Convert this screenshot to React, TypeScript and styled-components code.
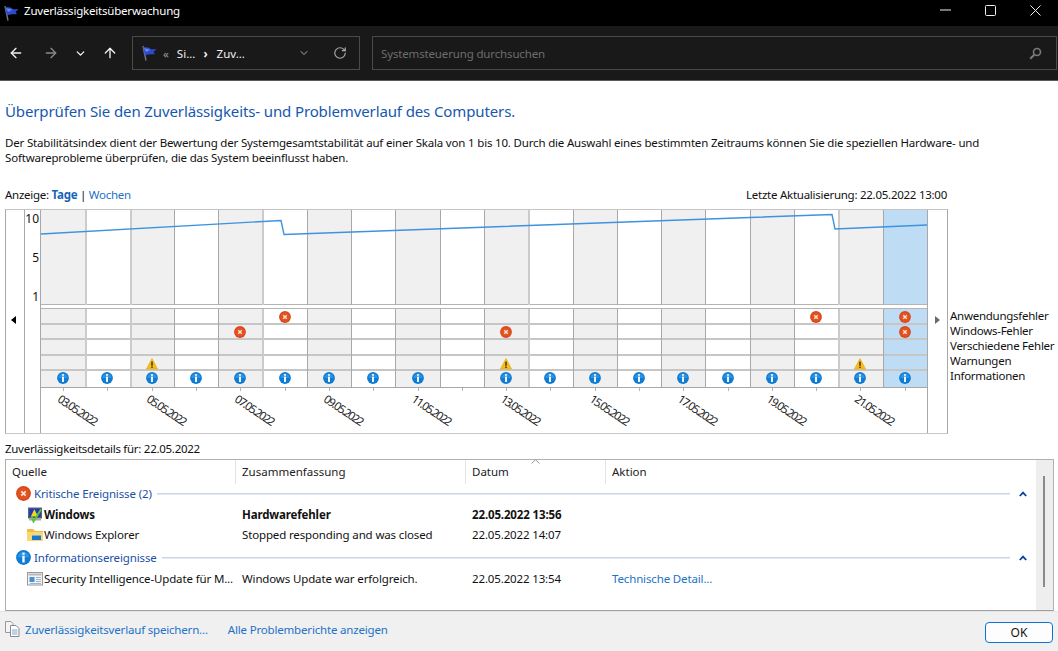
import React from "react";
import styled, { createGlobalStyle } from "styled-components";
import { ArrowLeft, ArrowRight, ArrowUp, ChevronDown, RotateCw } from "lucide-react";

const Global = createGlobalStyle`
  html, body { margin: 0; padding: 0; background: #fff; overflow: hidden; }
  body { font-family: "Noto Sans", "Liberation Sans", sans-serif; font-size: 11.5px; color: #000; }
  #root { width: 1058px; height: 651px; }
  svg { flex: none; }
`;

const Window = styled.div`
  width: 1058px; height: 651px; display: flex; flex-direction: column; overflow: hidden;
`;
const TitleBar = styled.div`
  height: 26px; background: #000; color: #fff; display: flex; align-items: center; padding-left: 3px; flex: none;
`;
const TitleText = styled.span`
  margin-left: 4px; font-size: 11.5px; letter-spacing: -.2px; margin-top: -6px;
`;
const WindowControls = styled.div`
  margin-left: auto; display: flex; align-items: center; height: 20px; gap: 34px; padding-right: 17px; margin-top: -6px;
`;
const Toolbar = styled.div`
  height: 54px; flex: none; background: #191919; border-bottom: 1px solid #5a5a5a; display: flex; align-items: center; box-sizing: content-box;
`;
const NavButton = styled.button<{ $w: number; $dim?: boolean }>`
  all: unset; width: ${p => p.$w}px; height: 34px; display: flex; align-items: center; justify-content: center;
  color: ${p => (p.$dim ? "#8a8a8a" : "#f2f2f2")};
`;
const NavGroup = styled.div`
  display: flex; padding-left: 1px; width: 132px; flex: none; box-sizing: border-box;
`;
const AddressBox = styled.div`
  width: 228px; height: 34px; box-sizing: border-box; border: 1px solid #4a4a4a; display: flex; align-items: center; color: #f0f0f0; padding-left: 8px; flex: none;
`;
const Crumb = styled.span<{ $dim?: boolean; $gap: number; $bold?: boolean }>`
  color: ${p => (p.$dim ? "#9a9a9a" : "#f0f0f0")}; margin-left: ${p => p.$gap}px; font-weight: ${p => (p.$bold ? 700 : 400)};
`;
const AddressTail = styled.div`
  margin-left: auto; display: flex; align-items: center; gap: 23px; padding-right: 12px; color: #aaa;
`;
const SearchBox = styled.div`
  margin-left: 12px; width: 685px; height: 34px; box-sizing: border-box; border: 1px solid #4a4a4a; display: flex; align-items: center; justify-content: space-between; padding: 0 14px 0 8px; color: #6d6d6d; flex: none; letter-spacing: -.15px;
`;
const Content = styled.main`
  flex: 1; min-height: 0; padding-left: 5px; display: flex; flex-direction: column;
`;
const Heading = styled.h1`
  font-size: 15px; line-height: 22px; font-weight: 400; color: #1558b0; margin: 19px 0 0; letter-spacing: -.12px;
`;
const Description = styled.p`
  line-height: 15px; margin: 13px 0 0; width: 1000px; letter-spacing: -.18px; color: #111;
`;
const ViewRow = styled.div`
  display: flex; justify-content: space-between; width: 942px; margin-top: 22px; line-height: 16px; letter-spacing: -.26px; height: 16px; color: #111;
`;
const Strong = styled.a`
  color: #1565b8; font-weight: 700;
`;
const Link = styled.a`
  color: #2272c8;
`;
const ChartRow = styled.div`
  display: flex; margin-top: 6px; flex: none;
`;
const Chart = styled.section`
  height: 225px; width: 943px; box-sizing: border-box; border: 1px solid #a8a8a8;
  border-bottom-color: #c8c8c8; border-top-color: #c4c4c4; display: grid; grid-template-columns: 19px 16px 886px 20px; flex: none; background: #fff;
`;
const Side = styled.div<{ $left?: boolean }>`
  display: flex; align-items: center; justify-content: center; padding: 0 ${p => (p.$left ? 3 : 0)}px 4px 0; border-${p => (p.$left ? "right" : "left")}: 1px solid #a8a8a8;
`;
const Scale = styled.div`
  position: relative; border-right: 1px solid #a8a8a8;
`;
const ScaleNumber = styled.span<{ $top: number }>`
  position: absolute; right: 1px; top: ${p => p.$top}px; line-height: 14px; font-size: 12px; color: #111;
`;
const Plot = styled.div`
  position: relative; display: grid; grid-template-rows: 95px 4px 79px 1fr; min-width: 0;
`;
const ColumnsRow = styled.div`
  display: grid; grid-template-columns: repeat(20, 44.3px);
`;
const leftLine = (n: number) => {
  if (n === 0) return "inset 0 0 0 transparent";
  return [1, 2, 5, 11, 18].includes(n) ? "inset 2px 0 0 #cbcbcb" : "inset 1px 0 0 #a8a8a8";
};
const fill = (kind: number) => (kind === 2 ? "#bfdcf5" : kind === 1 ? "#f0f0f0" : "#fff");
const TopColumn = styled.div<{ $kind: number; $n: number }>`
  background: ${p => fill(p.$kind)};
  box-shadow: ${p => leftLine(p.$n)}, inset 0 -1px 0 #b4b4b4;
`;
const LineOverlay = styled.svg`
  position: absolute; left: 0; top: 0; pointer-events: none;
`;
const Separator = styled.div`
  background: #fff; border-bottom: 1px solid #b4b4b4;
`;
const Events = styled.div`
  display: grid; grid-template-columns: repeat(20, 44.3px); grid-template-rows: repeat(5, 1fr); border-bottom: 1px solid #a8a8a8;
`;
const EventCell = styled.div<{ $kind: number; $n: number; $last: boolean }>`
  background: ${p => fill(p.$kind)};
  box-shadow: ${p => leftLine(p.$n)}${p => (p.$last ? "" : ", inset 0 -2px 0 #c6c6c6")};
  display: flex; align-items: center; justify-content: center; padding-bottom: ${p => (p.$last ? 2 : 0)}px;
`;
const Dates = styled.div`
  display: grid; grid-template-columns: repeat(20, 44.3px);
`;
const DateCell = styled.div`
  position: relative;
`;
const Tick = styled.i`
  position: absolute; left: 50%; top: 0; width: 1px; height: 3px; background: #b4b4b4;
`;
const DateText = styled.span`
  position: absolute; left: 22px; top: 4px; font-size: 11.5px; line-height: 13px; letter-spacing: -1.45px; transform: rotate(34deg); transform-origin: left top; white-space: nowrap; color: #222;
`;
const Legend = styled.ul`
  margin: 99px 0 0 2px; padding: 0; list-style: none; line-height: 15px; white-space: nowrap; letter-spacing: -.27px; color: #111;
`;
const DetailsTitle = styled.div`
  height: 16px; line-height: 16px; margin-top: 7px; letter-spacing: -.28px; color: #111;
`;
const DetailBox = styled.section`
  margin-top: 2px; width: 1049px; height: 152px; flex: none; box-sizing: border-box; border: 1px solid #b0b0b0; border-bottom-color: #a0a0a0; display: grid; grid-template-columns: 1fr 17px; background: #fff;
`;
const Scrollbar = styled.div`
  background: #eeeeee; position: relative;
`;
const Thumb = styled.div`
  position: absolute; left: 7px; top: 16px; width: 2px; height: 111px; background: #8b8b8b;
`;
const List = styled.div`
  min-width: 0; position: relative;
`;
const Header = styled.div`
  height: 24px; display: grid; grid-template-columns: 230px 230px 140px 1fr; align-items: center; color: #222;
`;
const HeaderCell = styled.div`
  height: 24px; line-height: 24px; padding-left: 6px; box-sizing: border-box; border-right: 1px solid #e4e4e4;
  &:last-child { border: none; }
`;
const SortMark = styled.svg`
  position: absolute; left: 525px; top: -1px;
`;
const GroupRow = styled.div<{ $top: number }>`
  display: flex; align-items: center; height: 21px; padding: 0 9px 0 10px; margin-top: ${p => p.$top}px; color: #2050a8; letter-spacing: -.14px;
`;
const GroupLabel = styled.span`
  margin-left: 3px; white-space: nowrap;
`;
const GroupLine = styled.div`
  flex: 1; height: 1px; background: #c8d4e8; margin-left: 5px; box-shadow: 0 1px 0 #e4eaf4;
`;
const Collapse = styled.svg`
  margin-left: 9px;
`;
const ItemRow = styled.div<{ $bold?: boolean; $h?: number }>`
  display: grid; grid-template-columns: 230px 230px 140px 1fr; height: ${p => p.$h ?? 21}px; align-items: center; font-weight: ${p => (p.$bold ? 700 : 400)}; letter-spacing: -.14px; color: #111; white-space: nowrap;
`;
const SourceCell = styled.div`
  display: flex; align-items: center; padding-left: 21px; gap: 1px; overflow: hidden;
`;
const ItemCell = styled.div`
  padding-left: 6px;
`;
const ActionLink = styled.a`
  color: #2272c8; padding-left: 6px;
`;
const Footer = styled.footer`
  height: 40px; flex: none; background: #f0f0f0; display: flex; align-items: center; padding: 0 5px; border-top: 1px solid #e4e4e4; box-sizing: border-box;
`;
const FooterLink = styled.a<{ $gap: number }>`
  color: #2272c8; letter-spacing: -.18px; margin-top: -5px; margin-left: ${p => p.$gap}px;
`;
const OkButton = styled.button`
  all: unset; margin-left: auto; width: 68px; height: 21px; box-sizing: border-box; background: #fdfdfd; border: 1px solid #0a74d4; border-radius: 4px; text-align: center; line-height: 19px; font-size: 12px; color: #111; margin-top: 2px;
`;
const FooterIcon = styled.svg`
  margin-top: -5px;
`;

const Flag = ({ s = 17 }: { s?: number }) => (
  <svg width={s} height={s} viewBox="0 0 17 17">
    <path d="M2 1 L5 15.5" stroke="#6c7a86" strokeWidth="1.4" fill="none" />
    <path d="M2 1.5 C5 3 7 1.5 9 3.5 C11 5 13 4 15.5 4 L12.5 7 L14 9 C11 9.5 8 8.5 4 10.5 Z" fill="#2f4ac8" />
    <path d="M3 3 C5 4 7 3 9 5 L5 7 Z" fill="#6288ec" />
  </svg>
);
const ErrorIcon = ({ s = 12 }: { s?: number }) => (
  <svg width={s} height={s} viewBox="0 0 13 13">
    <circle cx="6.5" cy="6.5" r="6.4" fill="#d8481c" />
    <circle cx="6.5" cy="6.5" r="5" fill="#e3531f" />
    <path d="M4.6 4.6 L8.4 8.4 M8.4 4.6 L4.6 8.4" stroke="#fbe3d8" strokeWidth="1.5" />
  </svg>
);
const InfoIcon = ({ s = 12 }: { s?: number }) => (
  <svg width={s} height={s} viewBox="0 0 13 13">
    <circle cx="6.5" cy="6.5" r="6.4" fill="#0f7bd2" />
    <path d="M1.5 6.5 A5 5 0 0 1 11.5 6.5 Z" fill="#2a93e4" />
    <rect x="5.5" y="2.3" width="2" height="1.8" fill="#fff" />
    <rect x="5.5" y="5" width="2" height="5.8" fill="#fff" />
  </svg>
);
const WarnIcon = () => (
  <svg width="12" height="12" viewBox="0 0 12 12">
    <path d="M6 .6 L11.6 11 H.4 Z" fill="#f6bd16" stroke="#e8a80c" strokeWidth=".6" strokeLinejoin="round" />
    <rect x="5.3" y="3.6" width="1.4" height="4.2" fill="#3a2c08" />
    <rect x="5.3" y="8.6" width="1.4" height="1.4" fill="#3a2c08" />
  </svg>
);
const MonitorIcon = () => (
  <svg width="16" height="16" viewBox="0 0 16 16">
    <rect x="1" y="0.5" width="14" height="11" fill="#5a6478" />
    <rect x="2.2" y="1.6" width="11.6" height="8.6" fill="#2438b4" />
    <path d="M7.4 2.2 L11 9.6 H3.8 Z" fill="#f0d820" />
    <rect x="2" y="11.5" width="12" height="2" fill="#a8a8a8" />
    <path d="M4.5 9.5 L6.5 14.5 L14 2.5" stroke="#5fc238" strokeWidth="2" fill="none" />
  </svg>
);
const FolderIcon = () => (
  <svg width="16" height="14" viewBox="0 0 16 14">
    <path d="M0 2 Q0 1 1 1 H6 L8 3 H16 V13 H0 Z" fill="#f2bc3a" />
    <rect x="0" y="4" width="16" height="9" fill="#fbd774" />
    <rect x="5" y="8" width="9" height="4" fill="#1e78c8" />
    <rect x="5" y="7" width="9" height="1" fill="#6cb4ec" />
  </svg>
);
const UpdateIcon = () => (
  <svg width="16" height="14" viewBox="0 0 16 14">
    <rect x=".5" y=".5" width="15" height="12.5" fill="#f4f4f4" stroke="#9a9a9a" />
    <rect x="1.5" y="1.5" width="13" height="2" fill="#b8b8b8" />
    <rect x="2.5" y="5" width="5" height="5" fill="#4a8fd0" />
    <path d="M9 5.5 H14 M9 7.5 H14 M9 9.5 H14 M3 11.5 H14" stroke="#9cb4cc" />
  </svg>
);
const PagesIcon = () => (
  <FooterIcon width="15" height="16" viewBox="0 0 15 16">
    <path d="M.5 .5 H6 L8 2.5 V11.5 H.5 Z" fill="#f4f4f4" stroke="#9a9a9a" />
    <path d="M5.5 4.5 H11 L14 7.5 V15.5 H5.5 Z" fill="#fff" stroke="#8a8a8a" />
    <path d="M7 9 H12.5 M7 11 H12.5 M7 13 H12.5" stroke="#7aa6d4" />
  </FooterIcon>
);
const CollapseIcon = () => (
  <Collapse width="8" height="6" viewBox="0 0 8 6">
    <path d="M.8 5 L4 1.6 L7.2 5" stroke="#0b3d9c" strokeWidth="1.8" fill="none" />
  </Collapse>
);
const Triangle = ({ dir, color }: { dir: "l" | "r"; color: string }) => (
  <svg width="5" height="8" viewBox="0 0 5 8">
    <path d={dir === "l" ? "M5 0 V8 L0 4 Z" : "M0 0 V8 L5 4 Z"} fill={color} />
  </svg>
);
const WinMin = () => <svg width="11" height="2" viewBox="0 0 11 2"><path d="M0 1 H11" stroke="#eee" /></svg>;
const WinMax = () => <svg width="11" height="11" viewBox="0 0 11 11"><rect x=".5" y=".5" width="10" height="10" rx="1" stroke="#eee" fill="none" /></svg>;
const WinClose = () => <svg width="11" height="11" viewBox="0 0 11 11"><path d="M.5 .5 L10.5 10.5 M10.5 .5 L.5 10.5" stroke="#eee" /></svg>;
const SearchGlyph = () => (
  <svg width="13" height="13" viewBox="0 0 13 13">
    <circle cx="8" cy="5" r="3.5" stroke="#7a7a7a" strokeWidth="1.6" fill="none" />
    <path d="M5.2 7.8 L1.2 11.8" stroke="#7a7a7a" strokeWidth="2" />
  </svg>
);

type Ev = "e" | "w" | "i" | null;
const kindOf = (c: number) => (c === 19 ? 2 : c % 2 === 0 ? 1 : 0);
const cols = Array.from({ length: 20 }, (_, i) => i);
const rowEvents = (r: number, c: number): Ev => {
  if (r === 0 && (c === 5 || c === 17 || c === 19)) return "e";
  if (r === 1 && (c === 4 || c === 10 || c === 19)) return "e";
  if (r === 3 && (c === 2 || c === 10 || c === 18)) return "w";
  if (r === 4 && c !== 9) return "i";
  return null;
};
const dates = ["03.05.2022", "05.05.2022", "07.05.2022", "09.05.2022", "11.05.2022", "13.05.2022", "15.05.2022", "17.05.2022", "19.05.2022", "21.05.2022"];

export default function App() {
  return (
    <Window>
      <Global />
      <TitleBar>
        <Flag />
        <TitleText>Zuverlässigkeitsüberwachung</TitleText>
        <WindowControls>
          <WinMin />
          <WinMax />
          <WinClose />
        </WindowControls>
      </TitleBar>
      <Toolbar>
        <NavGroup>
          <NavButton $w={30}><ArrowLeft size={16} /></NavButton>
          <NavButton $w={39} $dim><ArrowRight size={16} /></NavButton>
          <NavButton $w={21}><ChevronDown size={13} strokeWidth={2.5} /></NavButton>
          <NavButton $w={38}><ArrowUp size={16} /></NavButton>
        </NavGroup>
        <AddressBox>
          <Flag />
          <Crumb $dim $gap={5}>«</Crumb>
          <Crumb $gap={8}>Si...</Crumb>
          <Crumb $gap={8} $bold>›</Crumb>
          <Crumb $gap={9}>Zuv...</Crumb>
          <AddressTail>
            <ChevronDown size={12} />
            <RotateCw size={14} />
          </AddressTail>
        </AddressBox>
        <SearchBox>
          <span>Systemsteuerung durchsuchen</span>
          <SearchGlyph />
        </SearchBox>
      </Toolbar>
      <Content>
        <Heading>Überprüfen Sie den Zuverlässigkeits- und Problemverlauf des Computers.</Heading>
        <Description>
          Der Stabilitätsindex dient der Bewertung der Systemgesamtstabilität auf einer Skala von 1 bis 10. Durch die Auswahl eines bestimmten Zeitraums können Sie die speziellen Hardware- und Softwareprobleme überprüfen, die das System beeinflusst haben.
        </Description>
        <ViewRow>
          <span>Anzeige: <Strong>Tage</Strong> | <Link>Wochen</Link></span>
          <span>Letzte Aktualisierung: 22.05.2022 13:00</span>
        </ViewRow>
        <ChartRow>
          <Chart>
            <Side $left><Triangle dir="l" color="#000" /></Side>
            <Scale>
              <ScaleNumber $top={2}>10</ScaleNumber>
              <ScaleNumber $top={41}>5</ScaleNumber>
              <ScaleNumber $top={80}>1</ScaleNumber>
            </Scale>
            <Plot>
              <ColumnsRow>
                {cols.map(c => <TopColumn key={c} $kind={kindOf(c)} $n={c} />)}
              </ColumnsRow>
              <Separator />
              <Events>
                {[0, 1, 2, 3, 4].map(r => cols.map(c => {
                  const e = rowEvents(r, c);
                  return (
                    <EventCell key={`${r}-${c}`} $kind={kindOf(c)} $n={c} $last={r === 4}>
                      {e === "e" && <ErrorIcon />}
                      {e === "w" && <WarnIcon />}
                      {e === "i" && <InfoIcon />}
                    </EventCell>
                  );
                }))}
              </Events>
              <Dates>
                {cols.map(c => (
                  <DateCell key={c}>
                    <Tick />
                    {c % 2 === 0 && <DateText>{dates[c / 2]}</DateText>}
                  </DateCell>
                ))}
              </Dates>
              <LineOverlay width="886" height="95" viewBox="0 0 886 95">
                <polyline
                  points="0,24 240,10.5 243,24.5 791,4.5 794,19 886,15"
                  fill="none"
                  stroke="#3c93df"
                  strokeWidth="1.4"
                />
              </LineOverlay>
            </Plot>
            <Side><Triangle dir="r" color="#6a6a6a" /></Side>
          </Chart>
          <Legend>
            <li>Anwendungsfehler</li>
            <li>Windows-Fehler</li>
            <li>Verschiedene Fehler</li>
            <li>Warnungen</li>
            <li>Informationen</li>
          </Legend>
        </ChartRow>
        <DetailsTitle>Zuverlässigkeitsdetails für: 22.05.2022</DetailsTitle>
        <DetailBox>
          <List>
            <Header>
              <HeaderCell>Quelle</HeaderCell>
              <HeaderCell>Zusammenfassung</HeaderCell>
              <HeaderCell>Datum</HeaderCell>
              <HeaderCell>Aktion</HeaderCell>
            </Header>
            <SortMark width="9" height="5" viewBox="0 0 9 5">
              <path d="M.5 4.5 L4.5 .8 L8.5 4.5" stroke="#9a9a9a" fill="none" />
            </SortMark>
            <GroupRow $top={-1}>
              <ErrorIcon s={15} />
              <GroupLabel>Kritische Ereignisse (2)</GroupLabel>
              <GroupLine />
              <CollapseIcon />
            </GroupRow>
            <ItemRow $bold>
              <SourceCell><MonitorIcon />Windows</SourceCell>
              <ItemCell>Hardwarefehler</ItemCell>
              <ItemCell>22.05.2022 13:56</ItemCell>
            </ItemRow>
            <ItemRow $h={19}>
              <SourceCell><FolderIcon />Windows Explorer</SourceCell>
              <ItemCell>Stopped responding and was closed</ItemCell>
              <ItemCell>22.05.2022 14:07</ItemCell>
            </ItemRow>
            <GroupRow $top={3}>
              <InfoIcon s={15} />
              <GroupLabel>Informationsereignisse</GroupLabel>
              <GroupLine />
              <CollapseIcon />
            </GroupRow>
            <ItemRow $h={21}>
              <SourceCell><UpdateIcon />Security Intelligence-Update für M...</SourceCell>
              <ItemCell>Windows Update war erfolgreich.</ItemCell>
              <ItemCell>22.05.2022 13:54</ItemCell>
              <ActionLink>Technische Detail...</ActionLink>
            </ItemRow>
          </List>
          <Scrollbar><Thumb /></Scrollbar>
        </DetailBox>
      </Content>
      <Footer>
        <PagesIcon />
        <FooterLink $gap={5}>Zuverlässigkeitsverlauf speichern...</FooterLink>
        <FooterLink $gap={20}>Alle Problemberichte anzeigen</FooterLink>
        <OkButton>OK</OkButton>
      </Footer>
    </Window>
  );
}
